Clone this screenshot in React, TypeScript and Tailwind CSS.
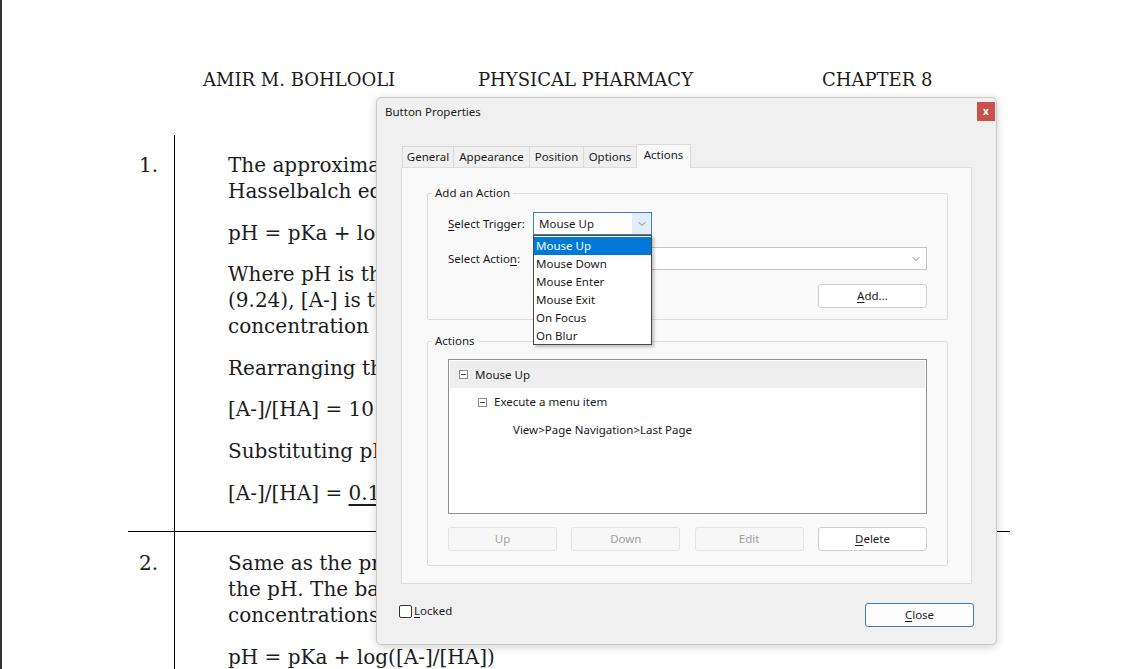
import { ChevronDown } from 'lucide-react'

const serif = { fontFamily: '"DejaVu Serif", "Liberation Serif", serif' }
const ui = { fontFamily: '"Noto Sans", "Liberation Sans", sans-serif' }

function MinusBox() {
  return (
    <svg width="9" height="9" viewBox="0 0 9 9" className="shrink-0">
      <rect x="0.5" y="0.5" width="8" height="8" fill="white" stroke="#8a8a8a" />
      <line x1="2" y1="4.5" x2="7" y2="4.5" stroke="#444" />
    </svg>
  )
}

function Btn({ label, u, disabled, primary }: { label: string; u?: number; disabled?: boolean; primary?: boolean }) {
  const text =
    u === undefined ? (
      label
    ) : (
      <>
        {label.slice(0, u)}
        <span className="underline underline-offset-2">{label[u]}</span>
        {label.slice(u + 1)}
      </>
    )
  return (
    <div
      className={`h-[24px] w-[109px] flex items-center justify-center rounded-[3px] border ${
        disabled
          ? 'border-[#e3e3e3] bg-[#f7f7f7] text-[#a0a0a0]'
          : primary
          ? 'border-[#3f7fae] bg-[#fdfdfd] text-[#1a1a1a]'
          : 'border-[#cfcfcf] bg-white text-[#1a1a1a]'
      }`}
    >
      {text}
    </div>
  )
}

function Dialog() {
  const tabs = [
    { name: 'General', w: 'w-[51px]' },
    { name: 'Appearance', w: 'w-[76px]' },
    { name: 'Position', w: 'w-[54px]' },
    { name: 'Options', w: 'w-[53px]' },
  ]
  const triggers = ['Mouse Up', 'Mouse Down', 'Mouse Enter', 'Mouse Exit', 'On Focus', 'On Blur']

  return (
    <div
      className="absolute left-[374px] top-[97px] w-[621px] h-[548px] bg-[#f0f0f0] border border-[#c8c8c8] rounded-[5px] shadow-[0_2px_10px_rgba(0,0,0,0.18)] flex flex-col text-[11.5px] text-[#1a1a1a]"
      style={ui}
    >
      {/* title bar */}
      <div className="flex items-start justify-between pl-[8px] pr-[1px] pt-[4px] h-[45px]">
        <span className="mt-[1px]">Button Properties</span>
        <div className="w-[18px] h-[19px] bg-[#c9504b] text-white text-[10px] font-bold flex items-center justify-center">
          x
        </div>
      </div>

      {/* tabs */}
      <div className="ml-[24px] mr-[24px] flex flex-col">
        <div className="flex items-end h-[24px] pl-[1px]">
          {tabs.map(t => (
            <div
              key={t.name}
              className={`${t.w} h-[21px] flex items-center justify-center border border-b-0 border-r-0 border-[#d9d9d9] bg-[#f0f0f0]`}
            >
              {t.name}
            </div>
          ))}
          <div className="w-[55px] h-[24px] flex items-center justify-center border border-b-0 border-[#d9d9d9] bg-[#f9f9f9] pb-[3px] -mb-[1px] relative z-10">
            Actions
          </div>
        </div>

        {/* panel */}
        <div className="h-[417px] bg-[#f9f9f9] border border-[#dcdcdc] pl-[25px] pr-[23px] pt-[17px]">
          <fieldset className="border border-[#dcdcdc] rounded-[2px] h-[135px] px-[4px]">
            <legend className="px-[3px] leading-[16px]">Add an Action</legend>
            <div className="px-[16px]">
              <div className="flex items-center mt-[11px] relative">
                <span className="w-[85px]">
                  <span className="underline underline-offset-2">S</span>elect Trigger:
                </span>
                <div className="relative">
                  <div className="w-[119px] h-[23px] border border-[#3d7fc1] bg-white flex items-center">
                    <span className="pl-[5px] flex-1">Mouse Up</span>
                    <div className="w-[19px] h-full bg-[#e1edf9] flex items-center justify-center">
                      <ChevronDown size={12} strokeWidth={1.5} color="#555" />
                    </div>
                  </div>
                  <div className="absolute left-0 top-[23px] w-[119px] h-[110px] bg-white border border-[#4a4a4a] shadow-[2px_2px_3px_rgba(0,0,0,0.25)] z-20 flex flex-col pt-[1px]">
                    {triggers.map((t, i) => (
                      <div
                        key={t}
                        className={`h-[18px] leading-[18px] pl-[2px] ${i === 0 ? 'bg-[#0078d7] text-white' : ''}`}
                      >
                        {t}
                      </div>
                    ))}
                  </div>
                </div>
              </div>
              <div className="flex items-center mt-[12px]">
                <span className="w-[85px]">
                  Select Actio<span className="underline underline-offset-2">n</span>:
                </span>
                <div className="flex-1 h-[23px] border border-[#c4c4c4] bg-white flex items-center justify-end pr-[4px]">
                  <ChevronDown size={12} strokeWidth={1.5} color="#555" />
                </div>
              </div>
              <div className="flex justify-end mt-[14px]">
                <Btn label="Add..." u={0} />
              </div>
            </div>
          </fieldset>

          <fieldset className="mt-[13px] border border-[#dcdcdc] rounded-[2px] h-[233px] px-[4px]">
            <legend className="px-[3px] leading-[16px]">Actions</legend>
            <div className="px-[16px]">
              <div className="mt-[10px] h-[155px] bg-white border border-[#8d9096] p-[1px]">
                <div className="h-[27px] bg-[#eeeeee] flex items-center gap-[7px] pl-[9px]">
                  <MinusBox />
                  <span>Mouse Up</span>
                </div>
                <div className="h-[28px] flex items-center gap-[7px] pl-[28px]">
                  <MinusBox />
                  <span>Execute a menu item</span>
                </div>
                <div className="h-[28px] flex items-center pl-[63px]">View&gt;Page Navigation&gt;Last Page</div>
              </div>
              <div className="flex justify-between mt-[13px]">
                <Btn label="Up" disabled />
                <Btn label="Down" disabled />
                <Btn label="Edit" disabled />
                <Btn label="Delete" u={0} />
              </div>
            </div>
          </fieldset>
        </div>
      </div>

      {/* footer */}
      <div className="flex items-center justify-between pl-[22px] pr-[22px] mt-[19px]">
        <div className="flex items-center gap-[2px] -mt-[10px]">
          <div className="w-[13px] h-[13px] border border-[#333] rounded-[2px] bg-white" />
          <span>
            <span className="underline underline-offset-2">L</span>ocked
          </span>
        </div>
        <div className="h-[26px]">
          <Btn label="Close" u={0} primary />
        </div>
      </div>
    </div>
  )
}

export default function App() {
  return (
    <div className="relative w-[1136px] h-[669px] overflow-hidden bg-white border-l-2 border-[#333]" style={serif}>
      {/* running header */}
      <div className="grid grid-cols-[275px_344px_auto] pl-[201px] pt-[68px] text-[18px] leading-[24px] text-[#1c1c1c]">
        <span>AMIR M. BOHLOOLI</span>
        <span>PHYSICAL PHARMACY</span>
        <span>CHAPTER 8</span>
      </div>

      {/* answers table */}
      <div className="ml-[126px] w-[882px] mt-[43px] text-[20px] leading-[26px] text-[#1c1c1c]">
        <div className="flex">
          <div className="w-[46px] pl-[11px] pt-[17px]">1.</div>
          <div className="flex-1 border-l-[1.5px] border-black pl-[53px] pt-[17px] pb-[10px] whitespace-nowrap overflow-hidden">
            <p className="mb-[15.6px]">
              The approximate pH of a solution can be found with the Henderson-
              <br />
              Hasselbalch equation:
            </p>
            <p className="mb-[15.6px]">pH = pKa + log([A-]/[HA])</p>
            <p className="mb-[15.6px]">
              Where pH is the target pH (8.50), pKa is the dissociation constant
              <br />
              (9.24), [A-] is the concentration of the conjugate base and [HA] is the
              <br />
              concentration of the weak acid.
            </p>
            <p className="mb-[15.6px]">Rearranging this equation gives:</p>
            <p className="mb-[15.6px]">[A-]/[HA] = 10^(pH - pKa)</p>
            <p className="mb-[15.6px]">Substituting pH = 8.50 and pKa = 9.24:</p>
            <p className="mb-[15.6px]">
              [A-]/[HA] = <span className="underline underline-offset-4">0.18</span>
            </p>
          </div>
        </div>
        <div className="flex border-t-[1.5px] border-black">
          <div className="w-[46px] pl-[11px] pt-[18px]">2.</div>
          <div className="flex-1 border-l-[1.5px] border-black pl-[53px] pt-[18px] pb-[40px] whitespace-nowrap overflow-hidden">
            <p className="mb-[16px]">
              Same as the previous problem, the buffer equation is used to find
              <br />
              the pH. The base and acid are present in the given molar
              <br />
              concentrations and the pKa of the acid is known.
            </p>
            <p>pH = pKa + log([A-]/[HA])</p>
          </div>
        </div>
      </div>

      <Dialog />
    </div>
  )
}
